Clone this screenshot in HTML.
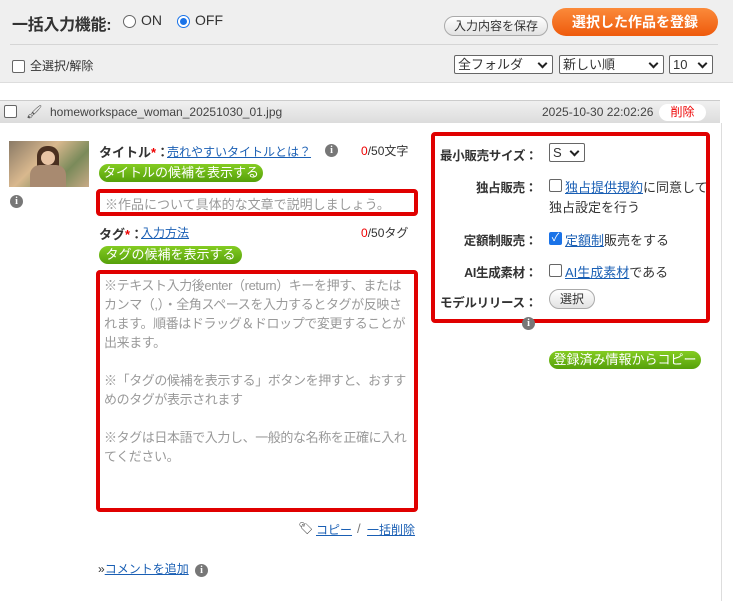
<!DOCTYPE html>
<html><head><meta charset="utf-8"><style>
*{box-sizing:border-box;margin:0;padding:0}
body{width:733px;height:601px;overflow:hidden;background:#fff;font-family:"Liberation Sans","Noto Sans CJK JP",sans-serif;font-size:13px;color:#333;position:relative}
.a{position:absolute;white-space:nowrap}
a,.lk{color:#1a5fb4;text-decoration:underline}
.gbtn{position:absolute;background:linear-gradient(#84cc22,#55a00a);color:#fff;border-radius:10px;font-size:13px;text-align:center;line-height:18px;height:18px}
.info{position:absolute;width:13px;height:13px;border-radius:50%;background:#777;color:#fff;font:bold 10px/13px "Liberation Serif",serif;text-align:center}
.cb{position:absolute;width:13px;height:13px;border:1px solid #666;border-radius:2px;background:#fff}
.sel{position:absolute;height:19px;border:1px solid #666;border-radius:2px;background:#fff;font-size:13px;line-height:17px;padding-left:3px}
.sel:after{content:"";position:absolute;right:6px;top:4px;width:5px;height:5px;border-right:2px solid #222;border-bottom:2px solid #222;transform:rotate(45deg)}
.red{position:absolute;border:4px solid #e00000;border-radius:4px}
.lbl{position:absolute;font-weight:bold;font-size:12.5px;text-align:right;width:97px;white-space:nowrap;letter-spacing:-0.3px}
.ph{color:#999}
</style></head><body>
<div class="a" style="left:0;top:0;width:733px;height:83px;background:#efefef;border-bottom:1px solid #ddd"></div>
<div class="a" style="left:10px;top:44px;width:708px;height:1px;background:#d5d5d5"></div>
<div class="a" style="left:12px;top:11px;font-size:16px;font-weight:bold;color:#333;letter-spacing:-0.3px">一括入力機能:</div>
<div class="a" style="left:123px;top:15px;width:13px;height:13px;border:1px solid #666;border-radius:50%;background:#fff"></div>
<div class="a" style="left:141px;top:12px;font-size:14px">ON</div>
<div class="a" style="left:177px;top:15px;width:13px;height:13px;border:1px solid #1a73e8;border-radius:50%;background:#fff"><div style="margin:2px;width:7px;height:7px;border-radius:50%;background:#1a73e8"></div></div>
<div class="a" style="left:195px;top:12px;font-size:14px">OFF</div>
<div class="a" style="left:444px;top:16px;width:104px;height:20px;border:1px solid #aaa;border-radius:10px;background:linear-gradient(#fff,#e2e2e2);font-size:12px;text-align:center;line-height:18px">入力内容を保存</div>
<div class="a" style="left:552px;top:8px;width:166px;height:28px;border-radius:14px;background:linear-gradient(#fb8a3a,#ee5a0c);color:#fff;font-weight:bold;font-size:14px;text-align:center;line-height:28px">選択した作品を登録</div>
<div class="cb" style="left:12px;top:60px"></div>
<div class="a" style="left:30px;top:57px;font-size:12px">全選択/解除</div>
<div class="sel" style="left:454px;top:55px;width:99px">全フォルダ</div>
<div class="sel" style="left:559px;top:55px;width:105px">新しい順</div>
<div class="sel" style="left:669px;top:55px;width:44px">10</div>
<div class="a" style="left:0;top:100px;width:720px;height:23px;background:linear-gradient(#f0f0f0,#dcdcdc);border-top:1px solid #ccc"></div>
<div class="cb" style="left:4px;top:105px"></div>
<div class="a" style="left:26px;top:104px;font-size:13px;color:#555">🖌</div>
<div class="a" style="left:50px;top:105px;font-size:12px;color:#444">homeworkspace_woman_20251030_01.jpg</div>
<div class="a" style="left:542px;top:105px;font-size:12px;color:#444">2025-10-30 22:02:26</div>
<div class="a" style="left:659px;top:104px;width:47px;height:17px;border-radius:9px;background:#fff;color:#e00;font-size:12px;text-align:center;line-height:17px">削除</div>
<div class="a" style="left:721px;top:123px;width:1px;height:478px;background:#ddd"></div>
<div class="a" style="left:9px;top:141px;width:80px;height:46px;background:linear-gradient(135deg,#8a7a66,#d9b88e 40%,#7a8a5a 70%,#c8aa86)"></div>
<div class="a" style="left:37px;top:146px;width:22px;height:30px;border-radius:10px 10px 4px 4px;background:#4a3020"></div>
<div class="a" style="left:41px;top:151px;width:14px;height:14px;border-radius:50%;background:#e8c4a4"></div>
<div class="a" style="left:30px;top:165px;width:36px;height:22px;border-radius:10px 10px 0 0;background:#a88a70"></div>
<div class="info" style="left:10px;top:195px">i</div>
<div class="a" style="left:99px;top:142px;font-weight:bold">タイトル<span style="color:#e00">*</span>：</div>
<a class="a" style="left:167px;top:143px;font-size:12px">売れやすいタイトルとは？</a>
<div class="info" style="left:325px;top:144px">i</div>
<div class="a" style="left:361px;top:142px;font-size:12px"><span style="color:#e00">0</span>/50文字</div>
<div class="gbtn" style="left:99px;top:164px;width:164px">タイトルの候補を表示する</div>
<div class="red" style="left:96px;top:189px;width:322px;height:27px"></div>
<div class="a ph" style="left:105px;top:194px">※作品について具体的な文章で説明しましょう。</div>
<div class="a" style="left:99px;top:224px;font-weight:bold">タグ<span style="color:#e00">*</span>：</div>
<a class="a" style="left:141px;top:224px;font-size:12px">入力方法</a>
<div class="a" style="left:361px;top:224px;font-size:12px"><span style="color:#e00">0</span>/50タグ</div>
<div class="gbtn" style="left:99px;top:246px;width:143px">タグの候補を表示する</div>
<div class="red" style="left:96px;top:270px;width:322px;height:242px"></div>
<div class="a ph" style="left:104px;top:276px;width:306px;white-space:normal;line-height:19px;letter-spacing:-0.4px">※テキスト入力後enter（return）キーを押す、またはカンマ（,）・全角スペースを入力するとタグが反映されます。順番はドラッグ＆ドロップで変更することが出来ます。<br><br>※「タグの候補を表示する」ボタンを押すと、おすすめのタグが表示されます<br><br>※タグは日本語で入力し、一般的な名称を正確に入れてください。</div>
<div class="a" style="left:298px;top:521px;font-size:12px">🏷</div>
<a class="a" style="left:316px;top:521px;font-size:12px">コピー</a>
<div class="a" style="left:357px;top:521px;color:#777">/</div>
<a class="a" style="left:367px;top:521px;font-size:12px">一括削除</a>
<div class="a" style="left:98px;top:560px;font-size:12px">»<span class="lk">コメントを追加</span></div>
<div class="info" style="left:195px;top:564px">i</div>
<div class="red" style="left:431px;top:132px;width:279px;height:191px"></div>
<div class="lbl" style="left:440px;top:145px">最小販売サイズ：</div>
<div class="sel" style="left:549px;top:143px;width:36px">S</div>
<div class="lbl" style="left:440px;top:177px">独占販売：</div>
<div class="cb" style="left:549px;top:179px"></div>
<div class="a" style="left:565px;top:177px"><a>独占提供規約</a>に同意して</div>
<div class="a" style="left:549px;top:197px">独占設定を行う</div>
<div class="lbl" style="left:440px;top:230px">定額制販売：</div>
<div class="a" style="left:549px;top:232px;width:13px;height:13px;border-radius:2px;background:#1a73e8;color:#fff;font-size:11px;line-height:13px;text-align:center">✓</div>
<div class="a" style="left:565px;top:230px"><a>定額制</a>販売をする</div>
<div class="lbl" style="left:440px;top:262px">AI生成素材：</div>
<div class="cb" style="left:549px;top:264px"></div>
<div class="a" style="left:565px;top:262px"><a>AI生成素材</a>である</div>
<div class="lbl" style="left:440px;top:292px">モデルリリース：</div>
<div class="a" style="left:549px;top:289px;width:46px;height:20px;border:1px solid #aaa;border-radius:10px;background:linear-gradient(#fff,#e2e2e2);font-size:12px;text-align:center;line-height:18px">選択</div>
<div class="info" style="left:522px;top:317px">i</div>
<div class="gbtn" style="left:549px;top:351px;width:152px">登録済み情報からコピー</div>
</body></html>
